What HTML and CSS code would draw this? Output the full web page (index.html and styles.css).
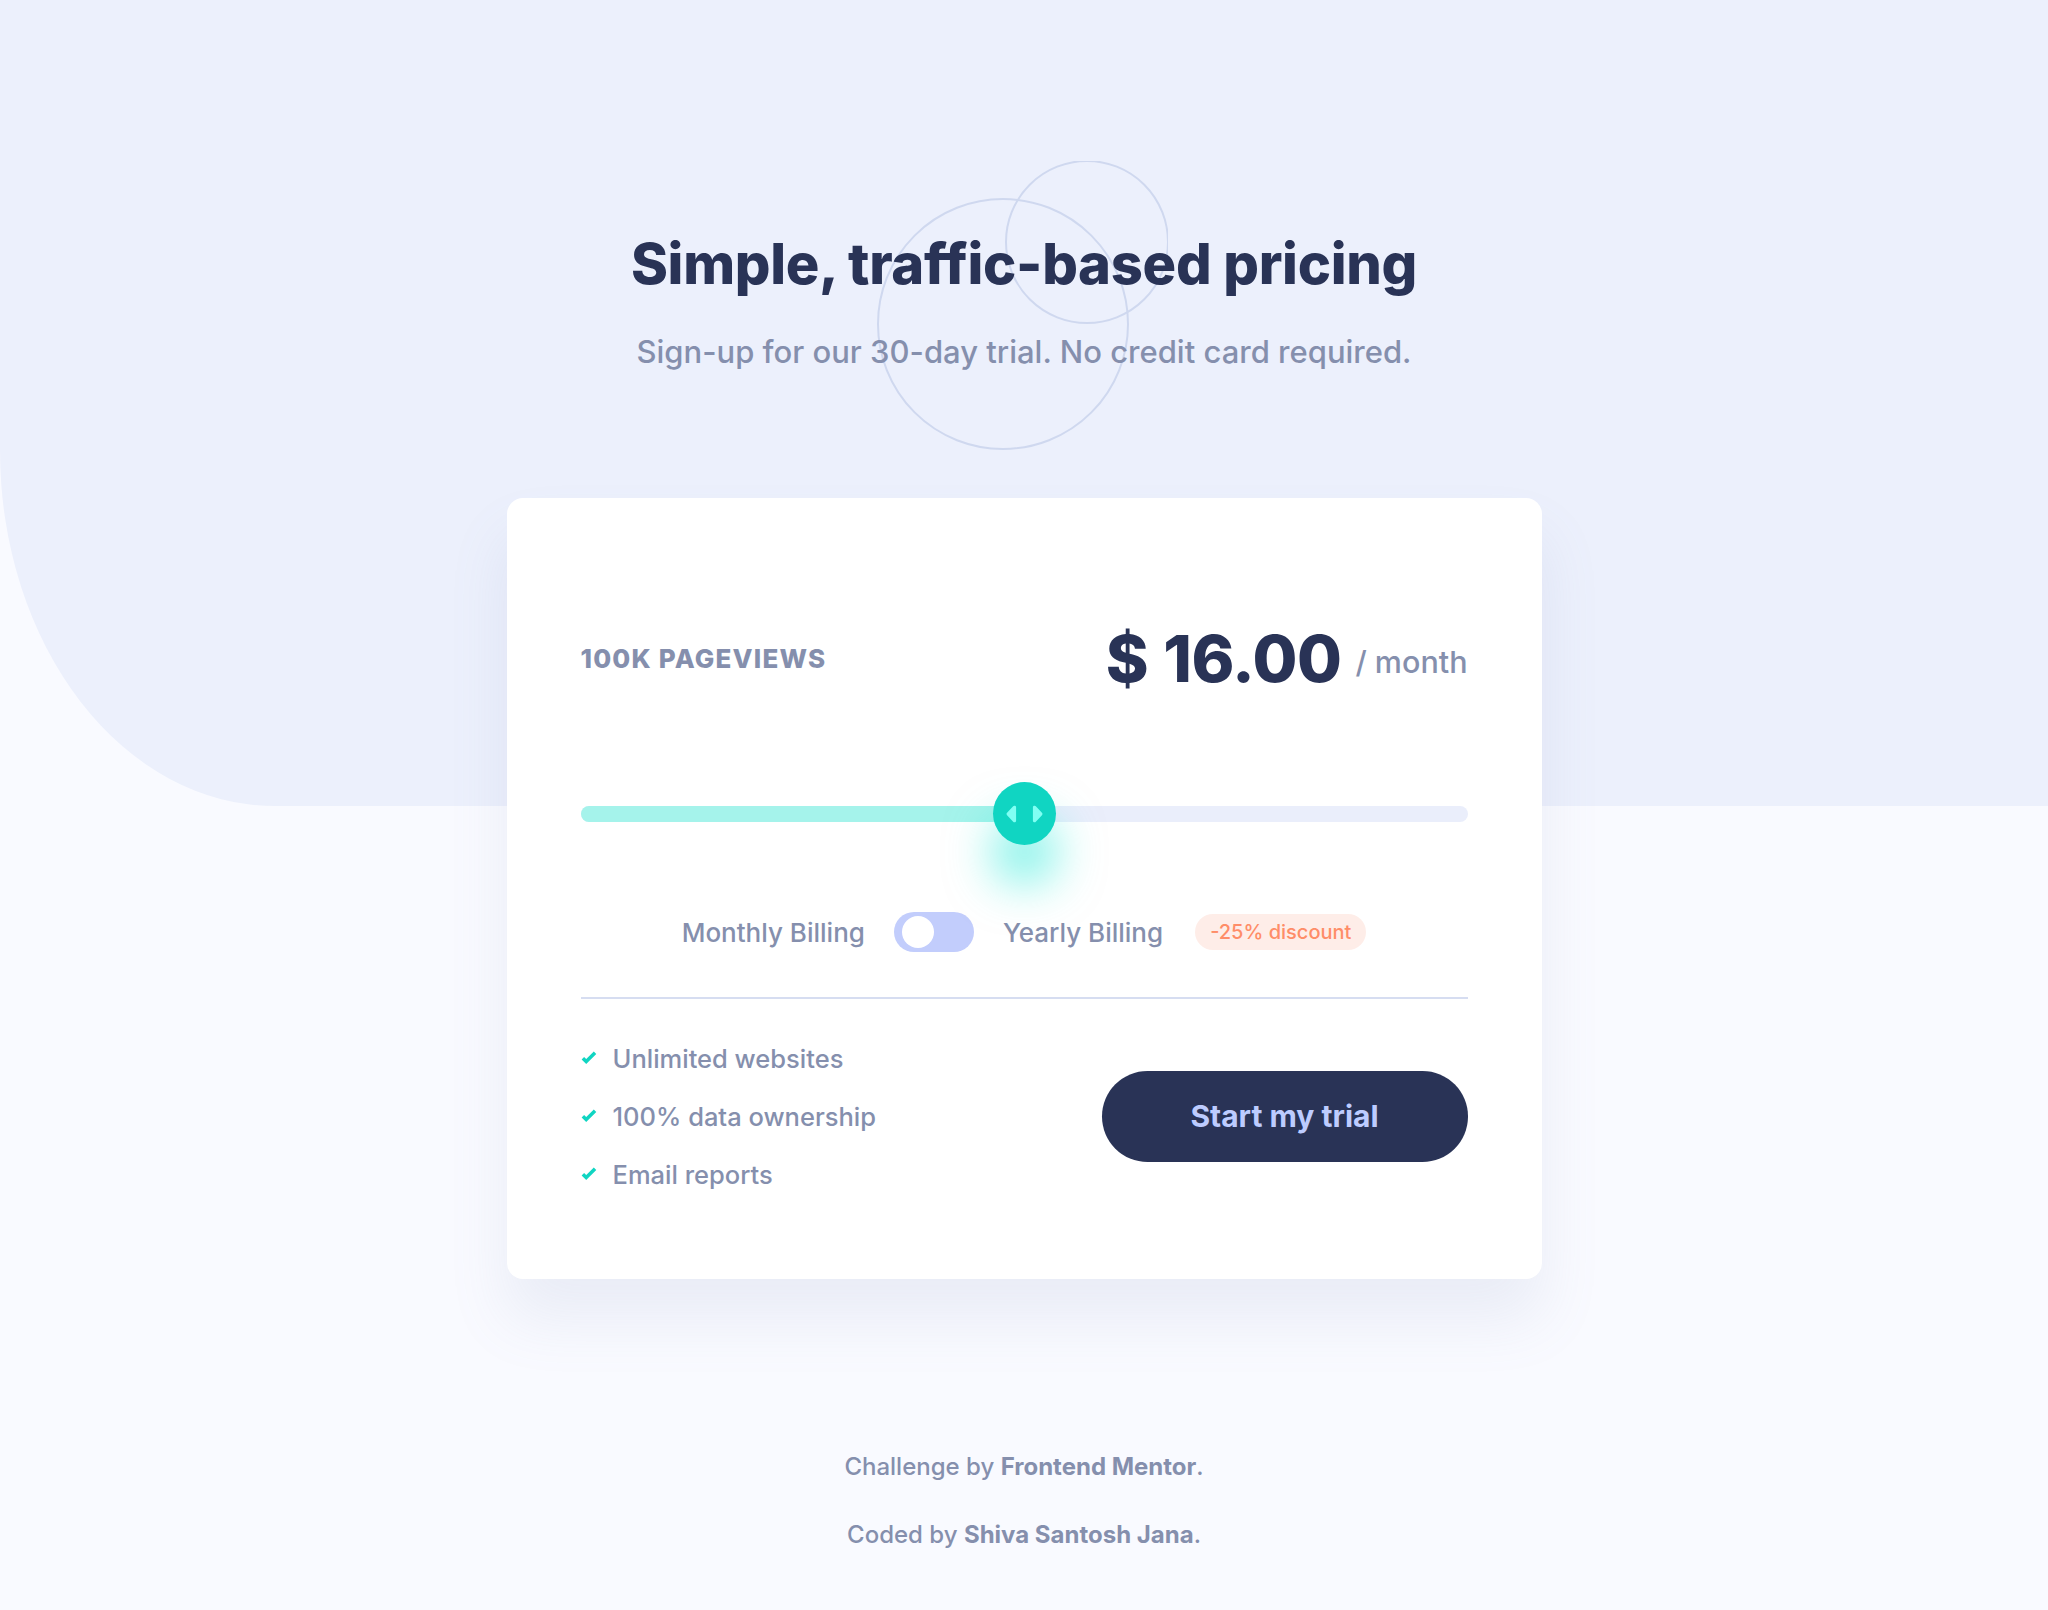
FILE: index.html
```html
<!DOCTYPE html>
<html lang="en">
<head>
  <meta charset="UTF-8" />
  <meta name="viewport" content="width=device-width, initial-scale=1.0" />
  <title>Interactive pricing component</title>
  <link rel="stylesheet" href="styles.css">
</head>
<body>
  <div class="bg-shape"></div>

  <main class="wrapper">
    <header class="intro">
      <svg class="circles" width="292" height="290" viewBox="0 0 146 145">
        <g fill="none" stroke="#CFD8EF">
          <circle cx="63.5" cy="81.5" r="62.5" />
          <circle cx="105.5" cy="40.5" r="40.5" />
        </g>
      </svg>
      <h1>Simple, traffic-based pricing</h1>
      <p>Sign-up for our 30-day trial. No credit card required.</p>
    </header>

    <!-- Pricing card -->
    <section class="card">
      <div class="card-top">
        <div class="views">100K Pageviews</div>
        <div class="price">
          <span class="amount"><span class="currency">$</span>16.00</span>
          <span class="period">/ month</span>
        </div>
      </div>

      <div class="slider">
        <div class="track-fill"></div>
        <div class="thumb">
          <svg width="37" height="22" viewBox="0 0 22 13">
            <path fill="#80FFF3" d="M16 2.558v7.884a1 1 0 001.735.679l3.639-3.943a1 1 0 000-1.356l-3.64-3.943A1 1 0 0016 2.558zM6 2.558v7.884a1 1 0 01-1.735.679L.626 7.178a1 1 0 010-1.356l3.64-3.943A1 1 0 016 2.558z" />
          </svg>
        </div>
      </div>

      <div class="billing">
        <span>Monthly Billing</span>
        <span class="toggle"><span class="knob"></span></span>
        <span>Yearly Billing</span>
        <span class="discount">-25% discount</span>
      </div>

      <div class="card-bottom">
        <ul class="features">
          <li><svg width="16" height="14" viewBox="0 0 9 8"><path fill="none" stroke="#10D5C2" stroke-width="2" d="M1 4.134l1.907 1.908L7.949 1" /></svg>Unlimited websites</li>
          <li><svg width="16" height="14" viewBox="0 0 9 8"><path fill="none" stroke="#10D5C2" stroke-width="2" d="M1 4.134l1.907 1.908L7.949 1" /></svg>100% data ownership</li>
          <li><svg width="16" height="14" viewBox="0 0 9 8"><path fill="none" stroke="#10D5C2" stroke-width="2" d="M1 4.134l1.907 1.908L7.949 1" /></svg>Email reports</li>
        </ul>
        <button class="trial-btn">Start my trial</button>
      </div>
    </section>

    <footer class="attribution">
      <p>Challenge by <strong>Frontend Mentor</strong>.</p>
      <p>Coded by <strong>Shiva Santosh Jana</strong>.</p>
    </footer>
  </main>
</body>
</html>
```

FILE: styles.css
```css
/* Base styling */
* { box-sizing: border-box; }
body {
  font-family: Inter, "Noto Sans", sans-serif;
  background: #f9faff;
  color: #858fad;
  margin: 0;
  min-height: 1610px;
  position: relative;
}
.bg-shape {
  position: absolute;
  top: 0;
  left: 0;
  width: 100%;
  height: 806px;
  background: #ecf0fc;
  border-bottom-left-radius: 275px 356px;
  z-index: 0;
}
.wrapper {
  position: relative;
  z-index: 1;
  width: 1035px;
  margin: 0 auto;
}

/* Heading */
.intro {
  position: relative;
  text-align: center;
  padding-top: 230px;
}
.circles {
  position: absolute;
  left: 369px;
  top: 161px;
  z-index: -1;
}
.intro h1 {
  margin: 0;
  font-size: 56px;
  line-height: 68px;
  font-weight: 800;
  color: #293356;
  letter-spacing: -0.3px;
}
.intro p {
  margin: 34px 0 0;
  font-size: 31px;
  line-height: 40px;
  font-weight: 500;
}

/* Card */
.card {
  margin-top: 126px;
  background: #fff;
  border-radius: 16px;
  box-shadow: 0 40px 60px rgba(127, 137, 185, 0.12);
  padding: 121px 74px 76px;
}
.card-top {
  display: flex;
  justify-content: space-between;
  align-items: center;
}
.views {
  font-size: 26px;
  font-weight: 800;
  letter-spacing: 1.2px;
  text-transform: uppercase;
}
.price {
  display: flex;
  align-items: center;
  gap: 14px;
}
.amount {
  font-size: 65px;
  font-weight: 800;
  color: #293356;
  letter-spacing: -0.5px;
}
.currency { margin-right: 15px; }
.period {
  font-size: 30.5px;
  font-weight: 500;
  padding-top: 6px;
}

/* Slider */
.slider {
  position: relative;
  height: 16px;
  margin-top: 108px;
  border-radius: 8px;
  background: #eaeefb;
}
.track-fill {
  width: 50%;
  height: 100%;
  border-radius: 8px;
  background: #a5f3eb;
}
.thumb {
  position: absolute;
  left: 50%;
  top: 50%;
  width: 63px;
  height: 63px;
  margin: -32px 0 0 -31px;
  border-radius: 50%;
  background: #10d5c2;
  box-shadow: 0 38px 48px rgba(0, 230, 210, 0.55);
  display: flex;
  align-items: center;
  justify-content: center;
}

/* Billing switch */
.billing {
  display: flex;
  justify-content: center;
  align-items: center;
  gap: 29px;
  margin-top: 90px;
  font-size: 26px;
  font-weight: 500;
}
.toggle {
  width: 80px;
  height: 40px;
  border-radius: 20px;
  background: #c2cdfc;
  padding: 4px 8px;
  display: flex;
}
.knob {
  width: 32px;
  height: 32px;
  border-radius: 50%;
  background: #fff;
}
.discount {
  margin-left: 3px;
  padding: 6px 15px;
  border-radius: 18px;
  background: #feede8;
  color: #ff8d68;
  font-size: 20px;
  font-weight: 500;
}

/* Bottom */
.card-bottom {
  display: flex;
  justify-content: space-between;
  align-items: center;
  margin-top: 45px;
  padding-top: 30px;
  border-top: 2px solid #d6ddf1;
}
.features {
  list-style: none;
  margin: 0;
  padding: 0;
  font-size: 25.5px;
  font-weight: 500;
}
.features li {
  display: flex;
  align-items: center;
  gap: 16px;
  height: 58px;
}
.trial-btn {
  width: 366px;
  height: 91px;
  border: none;
  border-radius: 46px;
  background: #293356;
  color: #bdccff;
  font-family: inherit;
  font-size: 30px;
  font-weight: 700;
  cursor: pointer;
}

/* Footer */
.attribution {
  text-align: center;
  margin-top: 173px;
  font-size: 24px;
  font-weight: 500;
}
.attribution p { margin: 0 0 39px; }
.attribution strong { font-weight: 700; }
```
